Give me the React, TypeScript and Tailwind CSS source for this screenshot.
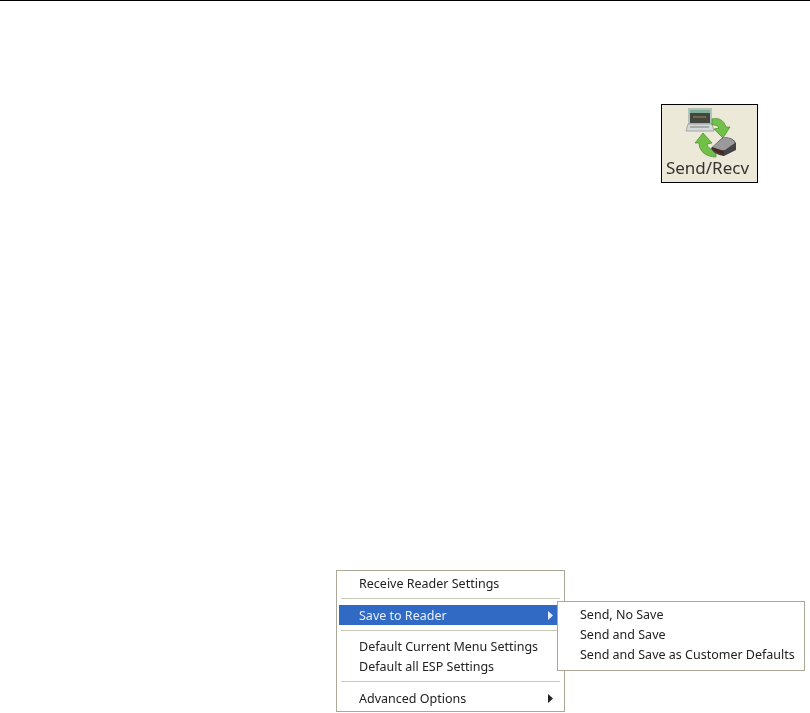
import React from 'react';

const font = { fontFamily: '"Noto Sans", sans-serif' };

function Arrow() {
  return (
    <svg width="7" height="9" viewBox="0 0 7 9" className="block">
      <path d="M1 0 L6 4.5 L1 9 Z" fill="currentColor" />
    </svg>
  );
}

function Separator({ short }: { short?: boolean }) {
  return (
    <div className={`${short ? 'h-[11px]' : 'h-3'} flex items-center px-0.5`}>
      <div className="w-full h-0.5 bg-[#c9c6ba] border-b border-white" />
    </div>
  );
}

function MenuItem({ label, arrow, active }: { label: string; arrow?: boolean; active?: boolean }) {
  return (
    <div className={`h-5 flex items-center justify-between pl-5 pr-2 ${active ? 'bg-[#316ac5] text-[#e8eef8]' : 'text-[#222]'}`}>
      <span className="relative top-px whitespace-nowrap blur-[0.3px]">{label}</span>
      {arrow && <Arrow />}
    </div>
  );
}

function SendRecvIcon() {
  // viewBox uses page coordinates so the shapes can be read straight off the screenshot
  return (
    <svg width="60" height="52" viewBox="680 106 60 52" className="block blur-[0.5px]">
      {/* laptop */}
      <rect x="688" y="108" width="24" height="16" fill="#b4c2ba" />
      <rect x="690" y="110" width="20" height="3" fill="#7fae9a" />
      <rect x="690" y="113" width="20" height="10" fill="#44463e" />
      <rect x="693" y="116" width="13" height="2" fill="#6f6a4a" />
      <path d="M688 124 H712 L714 131 H686 Z" fill="#d6d9d9" stroke="#8a8f92" strokeWidth="0.7" />
      <rect x="690" y="126" width="19" height="2" fill="#a5aaad" />
      {/* top arrow */}
      <path d="M712 119 C718 117 724 120 726 127 L730 127 L723 138 L714 129 L719 128 C717 125 715 125 712 125 Z" fill="#72c04a" stroke="#3f8f2c" strokeWidth="0.7" />
      {/* bottom arrow */}
      <path d="M716 157 C707 157 699 152 699 143 L695 143 L703 133 L712 143 L707 144 C708 148 711 150 716 150 Z" fill="#72c04a" stroke="#3f8f2c" strokeWidth="0.7" />
      {/* reader */}
      <path d="M711 148 L722 138 C728 136 733 138 736 143 L736 150 L724 156 C717 155 712 152 711 148 Z" fill="#444447" />
      <path d="M712 147 L723 138 C729 137 733 139 735 143 L725 150 C720 151 715 150 712 147 Z" fill="#9a9a9d" />
      <path d="M713 150 L724 156 L724 151 L712 147 Z" fill="#4a2a22" />
    </svg>
  );
}

export default function App() {
  return (
    <div className="w-[810px] h-[713px] bg-white overflow-hidden" style={font}>
      <div className="h-px bg-black" />

      <div className="flex justify-end pt-[103px] pr-[52px]">
        <div className="w-[97px] h-[79px] border border-black bg-[#ece9d8] flex flex-col items-center pt-px">
          <SendRecvIcon />
          <span className="text-[17px] leading-[20px] text-[#333] blur-[0.4px] pr-1">Send/Recv</span>
        </div>
      </div>

      <div className="pt-[387px] pl-[336px]">
        <div className="relative w-[229px] h-[142px] border border-[#aca899] bg-white pt-0.5 px-0.5 text-[12.5px]">
          <MenuItem label="Receive Reader Settings" />
          <Separator />
          <MenuItem label="Save to Reader" arrow active />
          <Separator short />
          <MenuItem label="Default Current Menu Settings" />
          <MenuItem label="Default all ESP Settings" />
          <Separator />
          <MenuItem label="Advanced Options" arrow />

          {/* submenu */}
          <div className="absolute left-[220px] top-[30px] w-[248px] h-[70px] border border-[#aca899] bg-white pt-0.5 px-0.5">
            <MenuItem label="Send, No Save" />
            <MenuItem label="Send and Save" />
            <MenuItem label="Send and Save as Customer Defaults" />
          </div>
        </div>
      </div>
    </div>
  );
}
